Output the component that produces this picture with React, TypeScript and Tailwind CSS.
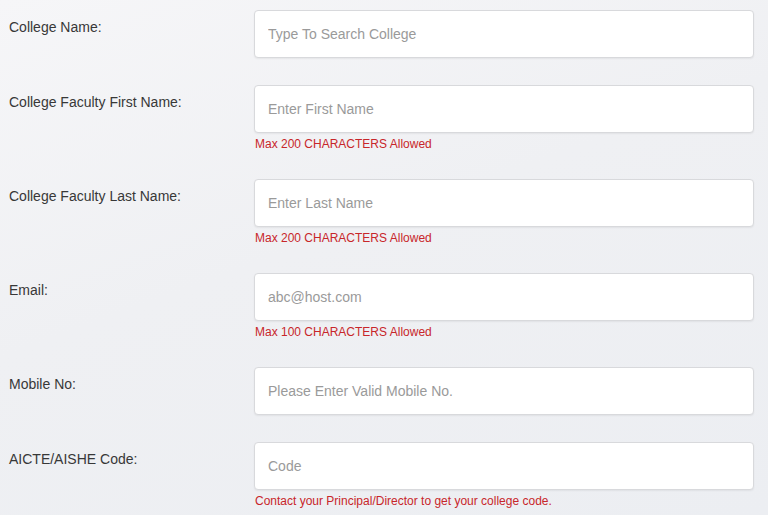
import React from "react";

type Field = { label: string; placeholder: string; note?: string };

const fields: Field[] = [
  { label: "College Name:", placeholder: "Type To Search College" },
  { label: "College Faculty First Name:", placeholder: "Enter First Name", note: "Max 200 CHARACTERS Allowed" },
  { label: "College Faculty Last Name:", placeholder: "Enter Last Name", note: "Max 200 CHARACTERS Allowed" },
  { label: "Email:", placeholder: "abc@host.com", note: "Max 100 CHARACTERS Allowed" },
  { label: "Mobile No:", placeholder: "Please Enter Valid Mobile No." },
  { label: "AICTE/AISHE Code:", placeholder: "Code", note: "Contact your Principal/Director to get your college code." },
];

export default function App() {
  return (
    <div
      className="w-[768px] h-[515px] overflow-hidden bg-[#eff0f3] bg-[linear-gradient(160deg,#f6f6f8_0%,#eff0f3_45%,#eceef2_100%)] pt-[10px]"
      style={{ fontFamily: '"Liberation Sans", Arial, sans-serif' }}
    >
      {fields.map((f, i) => (
        <div key={i} className="flex mb-[27px]">
          <div className="w-[254px] shrink-0 pl-[9px] pt-[7px] text-[14px] leading-[20px] text-[#383838]">
            {f.label}
          </div>
          <div className="w-[500px] flex flex-col">
            <input
              type="text"
              placeholder={f.placeholder}
              className="h-[48px] w-full rounded-[4px] border border-[#d8d9dc] bg-white px-[13px] text-[14px] text-[#333] placeholder:text-[#9a9a9a] shadow-[0_1px_2px_rgba(0,0,0,0.06)] outline-none"
              style={{ fontFamily: '"Liberation Sans", Arial, sans-serif' }}
            />
            {f.note && (
              <div className="mt-[4px] pl-[1px] text-[12px] leading-[15px] text-[#c8262a]">{f.note}</div>
            )}
          </div>
        </div>
      ))}
    </div>
  );
}
